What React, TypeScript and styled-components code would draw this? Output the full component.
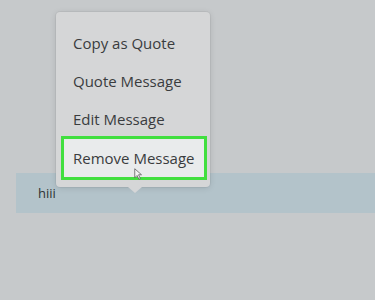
import styled, { createGlobalStyle } from "styled-components";

const GlobalStyle = createGlobalStyle`
  html, body {
    margin: 0;
    padding: 0;
    background: #c6c9cb;
  }
  body {
    font-family: "Open Sans", "Noto Sans", sans-serif;
  }
`;

const items = ["Copy as Quote", "Quote Message", "Edit Message", "Remove Message"];

const App = () => {
  return (
    <Page>
      <GlobalStyle />
      <MessageBar>
        <MessageText>hiii</MessageText>
      </MessageBar>
      <Menu>
        {items.map((label, i) => (
          <MenuItem key={label} $active={i === items.length - 1}>
            {label}
            {i === items.length - 1 && (
              <Cursor viewBox="0 0 12 16" width="9" height="12">
                <path
                  d="M1 1 L1 13 L4 10 L6.5 15 L8.5 14 L6 9 L10 9 Z"
                  fill="#f4f4f4"
                  stroke="#555"
                  strokeWidth="1"
                  strokeLinejoin="round"
                />
              </Cursor>
            )}
          </MenuItem>
        ))}
        <Arrow />
      </Menu>
    </Page>
  );
};

const Page = styled.div`
  position: relative;
  width: 375px;
  height: 300px;
  overflow: hidden;
  background: #c6c9cb;
  padding-top: 173px;
  box-sizing: border-box;
`;

const MessageBar = styled.div`
  margin-left: 16px;
  height: 40px;
  background: #b3c3ca;
  display: flex;
  align-items: center;
  padding-left: 22px;
`;

const MessageText = styled.span`
  font-size: 13px;
  color: #2f3335;
`;

const Menu = styled.div`
  position: absolute;
  left: 56px;
  top: 12px;
  width: 154px;
  box-sizing: border-box;
  padding: 12px 6px 10px 8px;
  background: #d5d6d7;
  border-radius: 4px;
  box-shadow: 0 0 0 1px rgba(0, 0, 0, 0.04), 0 1px 6px rgba(0, 0, 0, 0.12);
  display: flex;
  flex-direction: column;
`;

const MenuItem = styled.div<{ $active?: boolean }>`
  position: relative;
  height: 38px;
  display: flex;
  align-items: center;
  padding-left: 9px;
  font-size: 15px;
  color: #3a3c3e;
  background: ${(p) => (p.$active ? "#e9ebec" : "transparent")};
  outline: ${(p) => (p.$active ? "3px solid #41df3f" : "none")};
  outline-offset: 0;
  margin-top: ${(p) => (p.$active ? "1px" : "0")};
`;

const Cursor = styled.svg`
  position: absolute;
  left: 70px;
  top: 29px;
`;

const Arrow = styled.div`
  position: absolute;
  left: 72px;
  bottom: -6px;
  width: 0;
  height: 0;
  border-left: 7px solid transparent;
  border-right: 7px solid transparent;
  border-top: 6px solid #d5d6d7;
`;

export default App;
